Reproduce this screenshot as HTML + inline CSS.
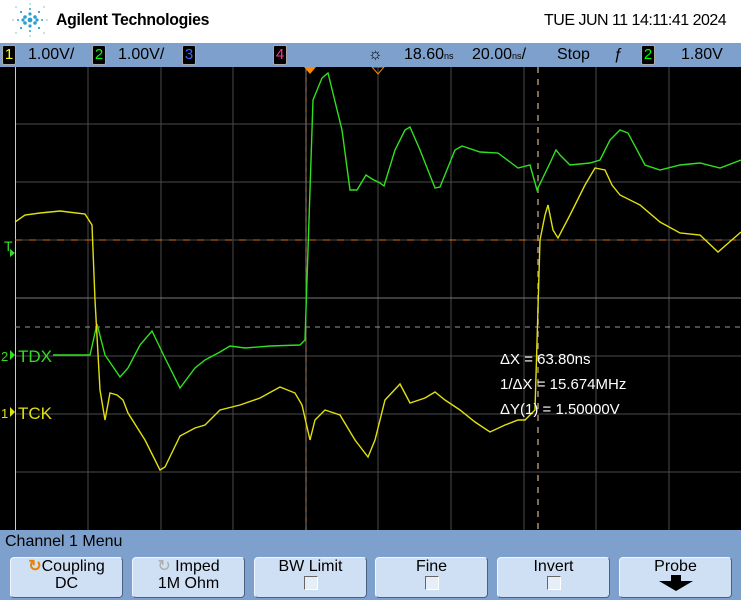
<!DOCTYPE html>
<html><head><style>
body{margin:0;width:741px;height:600px;overflow:hidden;background:#fff;font-family:"Liberation Sans",sans-serif;position:relative}
.abs{position:absolute}
.bar{top:43px;left:0;width:741px;height:24px;background:#7ea0cc;border-bottom:1px solid #c8d8ec}
.t{font-size:16px;color:#000;top:3px;position:absolute}
.ch{position:absolute;top:2px;width:12px;height:18px;background:#000;border:1px solid #aaa;border-radius:2px;font-size:15px;text-align:center;line-height:18px}
.menu{top:530px;left:0;width:741px;height:70px;background:#7ea0cc}
.btn{position:absolute;top:27px;width:111px;height:39px;background:#cfe0f4;border:1px solid #f0f6ff;border-right-color:#4a6080;border-bottom-color:#4a6080;border-radius:4px;text-align:center;font-size:16px;line-height:17px;color:#000}
.cb{display:inline-block;width:12px;height:12px;border:1px solid #666;border-right-color:#fff;border-bottom-color:#fff;background:#e6eef8;margin-top:1px}
</style></head><body>
<svg class="abs" style="left:10px;top:2px" width="40" height="36" viewBox="0 0 40 36">
<g fill="#2aa0d0">
<circle cx="20" cy="18" r="2.4"/><circle cx="15" cy="15" r="1.8"/><circle cx="25" cy="15" r="1.8"/><circle cx="15" cy="21" r="1.8"/><circle cx="25" cy="21" r="1.8"/>
<circle cx="20" cy="12" r="1.6"/><circle cx="20" cy="24" r="1.6"/><circle cx="13" cy="18" r="1.6"/><circle cx="27" cy="18" r="1.6"/>
<circle cx="20" cy="7" r="1"/><circle cx="20" cy="29" r="1"/><circle cx="8" cy="18" r="1"/><circle cx="32" cy="18" r="1"/>
<circle cx="11" cy="10" r="1.1"/><circle cx="29" cy="10" r="1.1"/><circle cx="11" cy="26" r="1.1"/><circle cx="29" cy="26" r="1.1"/>
<circle cx="20" cy="2" r=".6"/><circle cx="20" cy="34" r=".6"/><circle cx="3" cy="18" r=".6"/><circle cx="37" cy="18" r=".6"/>
<circle cx="6" cy="5" r=".6"/><circle cx="34" cy="5" r=".6"/><circle cx="6" cy="31" r=".6"/><circle cx="34" cy="31" r=".6"/>
</g></svg>
<div class="abs" style="left:56px;top:10px;font-size:17px;font-weight:bold;letter-spacing:-0.3px;transform:scaleX(0.93);transform-origin:left">Agilent Technologies</div>
<div class="abs" style="left:544px;top:12px;font-size:16px;letter-spacing:-0.5px">TUE JUN 11 14:11:41 2024</div>
<div class="abs bar">
<div class="ch" style="left:2px;color:#ff0">1</div><div class="t" style="left:28px">1.00V/</div>
<div class="ch" style="left:92px;color:#0f0">2</div><div class="t" style="left:118px">1.00V/</div>
<div class="ch" style="left:182px;color:#36f">3</div>
<div class="ch" style="left:273px;color:#f39">4</div>
<div class="t" style="left:368px;font-size:16px">☼</div>
<div class="t" style="left:404px">18.60<span style="font-size:9px">ns</span></div>
<div class="t" style="left:472px">20.00<span style="font-size:9px">ns</span>/</div>
<div class="t" style="left:557px">Stop</div>
<div class="t" style="left:614px">ƒ</div>
<div class="ch" style="left:641px;color:#0f0">2</div>
<div class="t" style="left:681px">1.80V</div>
</div>
<svg class="abs" style="left:0;top:67px" width="741" height="463" viewBox="0 67 741 463">
<rect x="0" y="67" width="741" height="463" fill="#000"/>
<g stroke="#4a4a4a" stroke-width="1">
<path d="M88 67V530M161 67V530M233 67V530M378 67V530M451 67V530M524 67V530M596 67V530M669 67V530"/>
<path d="M15 124H741M15 182H741M15 240H741M15 356H741M15 414H741M15 472H741"/>
</g>
<g stroke="#777" stroke-width="1"><path d="M15 298H741M306 67V530"/></g>
<path d="M15.5 67V530" stroke="#ccc"/>
<path d="M15 240H741" stroke="#e07000" stroke-dasharray="7,7"/>
<path d="M15 327H741" stroke="#999" stroke-dasharray="5,5"/>
<path d="M306 67V530" stroke="#c08040" stroke-dasharray="5,5"/>
<path d="M538 67V530" stroke="#a89070" stroke-width="1.5" stroke-dasharray="6,6"/>
<path d="M304 67h12l-6 7z" fill="#f80"/><path d="M372 67h12l-6 7z" fill="none" stroke="#f80"/>
<polyline fill="none" stroke="#30e020" stroke-width="1.4" points="53,355 90,355 97,324 105,355 120,377 128,368 140,345 152,331 165,358 180,388 195,368 205,360 220,352 230,346 245,348 270,346 300,345 305,340 313,100 322,78 328,73 342,130 350,190 357,190 366,175 372,179 380,183 384,186 395,150 405,130 410,127 420,150 435,188 440,187 455,150 462,146 480,152 498,153 510,162 518,168 530,165 537,190 550,163 556,150 560,155 570,165 590,163 600,160 610,140 620,130 628,133 645,165 660,170 680,165 700,163 720,168 741,160"/>
<polyline fill="none" stroke="#e0e010" stroke-width="1.4" points="15,222 25,215 40,213 60,211 85,214 92,225 95,300 100,390 105,420 110,393 117,395 123,400 128,413 145,440 160,470 165,467 180,436 195,428 205,425 220,410 240,405 260,398 280,387 295,393 302,405 310,440 315,420 325,410 340,415 355,440 368,457 375,440 385,400 400,384 410,403 425,398 435,392 445,400 460,410 475,422 490,432 505,425 518,420 525,420 535,410 540,240 545,215 548,205 553,230 558,238 570,215 585,185 595,168 605,170 612,185 620,195 640,205 660,222 680,233 700,235 718,252 741,232"/>
<text x="4" y="251" fill="#30e020" font-size="14" font-family="Liberation Sans">T</text>
<path d="M10 249l5 4-5 4z" fill="#30e020"/>
<text x="1" y="361" fill="#30e020" font-size="13" font-family="Liberation Sans">2</text><path d="M10 350l5 5-5 5z" fill="#30e020"/>
<text x="18" y="362" fill="#30e020" font-size="17" font-family="Liberation Sans">TDX</text>
<text x="1" y="418" fill="#e0e010" font-size="13" font-family="Liberation Sans">1</text><path d="M10 407l5 5-5 5z" fill="#e0e010"/>
<text x="18" y="419" fill="#e0e010" font-size="17" font-family="Liberation Sans">TCK</text>
<g fill="#fff" font-size="15" font-family="Liberation Sans">
<text x="500" y="364">ΔX = 63.80ns</text>
<text x="500" y="389">1/ΔX = 15.674MHz</text>
<text x="500" y="414">ΔY(1) = 1.50000V</text>
</g>
</svg>
<div class="abs menu">
<div class="abs" style="left:5px;top:3px;font-size:16px">Channel 1  Menu</div>
<div class="btn" style="left:10px"><span style="color:#e88000;font-weight:bold">↻</span>Coupling<br>DC</div>
<div class="btn" style="left:132px"><span style="color:#aaa">↻</span> Imped<br>1M Ohm</div>
<div class="btn" style="left:254px">BW Limit<br><span class="cb"></span></div>
<div class="btn" style="left:375px">Fine<br><span class="cb"></span></div>
<div class="btn" style="left:497px">Invert<br><span class="cb"></span></div>
<div class="btn" style="left:619px">Probe<br><svg width="36" height="16" viewBox="0 0 36 16"><path d="M13 0h10v6h12L18 16 1 6h12z" fill="#000"/></svg></div>
</div>
</body></html>
